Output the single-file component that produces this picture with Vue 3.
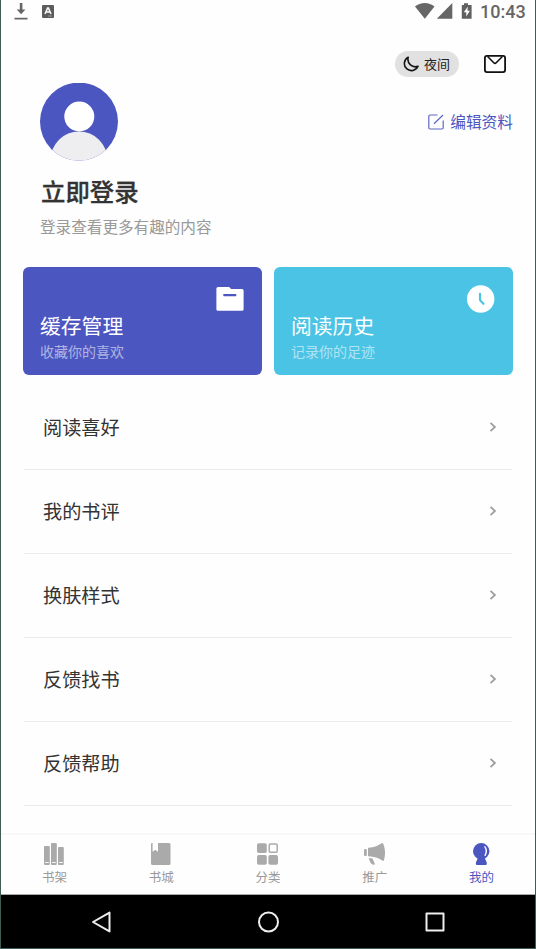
<script setup>
const rows = ['阅读喜好', '我的书评', '换肤样式', '反馈找书', '反馈帮助']
const cards = [
  { id: 'cache', title: '缓存管理', note: '收藏你的喜欢' },
  { id: 'history', title: '阅读历史', note: '记录你的足迹' },
]
const tabs = [
  { id: 'shelf', label: '书架' },
  { id: 'store', label: '书城' },
  { id: 'category', label: '分类' },
  { id: 'promo', label: '推广' },
  { id: 'mine', label: '我的' },
]
</script>

<template>
  <div class="screen">
    <header class="status">
      <div class="status-left">
        <svg width="14" height="18" viewBox="0 0 14 18">
          <path d="M5.800 1h2.600v6.500h3L7.100 12.200 2.700 7.500h3.100zM.5 15.800h13v1.700H.5z" fill="#666" />
        </svg>
        <svg width="12" height="13" viewBox="0 0 12 13">
          <rect width="12" height="13" rx="1" fill="#5c5c5c" />
          <path d="M3 9 5.600 3h.8L9 9M4.300 7h3.400" fill="none" stroke="#fff" stroke-width="1.500" />
          <path d="M6.500 11h1M8.500 11h1" stroke="#ddd" />
        </svg>
      </div>
      <div class="status-right">
        <svg width="58" height="18" viewBox="0 0 58 18">
          <path d="M0 4.500C5.500-.3 14-.3 19.500 4.500L9.800 16.700z" fill="#666" />
          <path d="M37.300 1v15.700H21.800z" fill="#666" />
          <path d="M49 1.300h4V3h3.600v13.700H46.800V3H49z" fill="#606060" />
          <path d="M52.700 4.700 48.800 10.200h2.500v4.400l3.600-5.800h-2.400z" fill="#fff" />
        </svg>
        <span class="time">10:43</span>
      </div>
    </header>

    <div class="tools">
      <button class="night">
        <svg width="16" height="16" viewBox="0 0 16 16">
          <path d="M5.200 1.200A7.100 7.100 0 1 0 15 10.300C9.500 12.300 3.600 7.500 5.200 1.200Z" fill="none" stroke="#151515" stroke-width="1.600" stroke-linejoin="round" />
        </svg>
        <span>夜间</span>
      </button>
      <svg width="22" height="18" viewBox="0 0 22 18">
        <rect x=".9" y=".9" width="20.200" height="16.200" rx="2" fill="none" stroke="#111" stroke-width="1.800" />
        <path d="M3.600 1.500 9.800 7.700q1.200 1.200 2.400 0L18.400 1.500" fill="none" stroke="#111" stroke-width="1.600" />
      </svg>
    </div>

    <section class="profile">
      <div class="avatar-row">
        <svg class="avatar" width="78" height="78" viewBox="0 0 78 78">
          <defs><clipPath id="disc"><circle cx="39" cy="38.600" r="39" /></clipPath></defs>
          <g clip-path="url(#disc)">
            <rect width="78" height="78" fill="#4c56c0" />
            <circle cx="39" cy="76.700" r="28.300" fill="#eeedef" />
            <circle cx="39.300" cy="33.500" r="15" fill="#fff" />
          </g>
        </svg>
        <a class="edit">
          <svg width="16" height="16" viewBox="0 0 16 16">
            <path d="M9.500 1H2Q.8 1 .8 2.200v11.600Q.8 15 2 15h12q1.200 0 1.200-1.200V6.500M6 9.800 15 1" fill="none" stroke="#5f67c4" stroke-width="1.200" />
          </svg>
          <span>编辑资料</span>
        </a>
      </div>
      <h1>立即登录</h1>
      <p>登录查看更多有趣的内容</p>
    </section>

    <section class="cards">
      <article v-for="card in cards" :key="card.id" class="card" :class="card.id">
        <svg v-if="card.id === 'cache'" class="card-icon" width="28" height="28" viewBox="0 0 28 28">
          <path d="M2 2h10.500q1 0 1.600.8l.9 1.200H26q1.600 0 1.600 1.600v18.600q0 1.600-1.600 1.600H2q-1.600 0-1.600-1.600V3.600Q.4 2 2 2z" fill="#fff" />
          <rect x="7.300" y="9" width="13" height="2.200" rx=".6" fill="#4c56c0" />
        </svg>
        <svg v-else class="card-icon" width="28" height="28" viewBox="0 0 28 28">
          <circle cx="13.700" cy="14" r="13.700" fill="#fff" />
          <path d="M13 8.800v5.500q0 1 .7 1.700l2.800 2.800" fill="none" stroke="#4ac3e5" stroke-width="2.200" stroke-linecap="round" />
        </svg>
        <h2>{{ card.title }}</h2>
        <p>{{ card.note }}</p>
      </article>
    </section>

    <ul class="list">
      <li v-for="row in rows" :key="row">
        <span>{{ row }}</span>
        <svg width="7" height="10" viewBox="0 0 7 10">
          <path d="M1.500.8 5.900 5 1.500 9.200" fill="none" stroke="#a0a0a0" stroke-width="1.800" />
        </svg>
      </li>
    </ul>

    <nav class="tabs">
      <a v-for="tab in tabs" :key="tab.id" :class="{ active: tab.id === 'mine' }">
        <svg width="22" height="22" viewBox="0 0 22 22" fill="currentColor">
          <template v-if="tab.id === 'shelf'">
            <rect x="1" y="3" width="5.800" height="19" rx="1" />
            <rect x="8" y="0" width="5.800" height="22" rx="1" />
            <rect x="15" y="4" width="5.800" height="18" rx="1" />
            <path d="M2 19.500h3.800M9 19.500h3.800M16 19.500h3.800" stroke="#fff" stroke-width=".9" />
          </template>
          <template v-else-if="tab.id === 'store'">
            <path d="M1 1.300Q1 0 2.300 0h.3v8.800l2.700-2 2.700 2V0H19q1.500 0 1.500 1.500v19Q20.500 22 19 22H2.500Q1 22 1 20.500z" />
          </template>
          <template v-else-if="tab.id === 'category'">
            <rect x="0" y=".2" width="9.800" height="9.800" rx="1.800" />
            <rect x="12.200" y="1" width="8" height="8.200" rx="1.200" fill="none" stroke="currentColor" stroke-width="1.500" />
            <rect x="0" y="12" width="9.800" height="9.800" rx="1.800" />
            <rect x="11.400" y="12" width="9.600" height="9.800" rx="1.800" />
          </template>
          <template v-else-if="tab.id === 'promo'">
            <rect x="0" y="6" width="2.800" height="7" rx="1" />
            <path d="M4 5.200Q4 4.700 4.500 4.700C10.500 4.500 14.500 2.500 17.700.3q1-.7 1.500.4c2.300 5 2.300 11.500.8 16.300q-.5 1.400-1.700.6C14.500 15 10 13.500 4.500 13.300q-.5 0-.5-.5zM4.800 15l3.800.6q1 2.600 2.100 4.800.5 1.200-.8 1.300Q6.500 22.200 4.800 15z" />
          </template>
          <template v-else>
            <circle cx="10.200" cy="8.200" r="8.200" />
            <path d="M6.700 15h7.200l.9 2.500q1 .8 1 3.200 0 1.300-1.200 1.300H6q-1.200 0-1.200-1.300 0-2.400 1.100-3.200z" />
            <path d="M13.900 3.800q2.700 3.800.2 8.500" fill="none" stroke="#fff" stroke-width="1.400" stroke-linecap="round" />
          </template>
        </svg>
        <span>{{ tab.label }}</span>
      </a>
    </nav>

    <footer class="system">
      <svg width="24" height="24" viewBox="0 0 24 24"><path d="M19.500 2.600v18.800L3 12z" /></svg>
      <svg width="24" height="24" viewBox="0 0 24 24"><circle cx="11.500" cy="12" r="9.500" /></svg>
      <svg width="24" height="24" viewBox="0 0 24 24"><rect x="3.500" y="3.500" width="17" height="17" /></svg>
    </footer>
  </div>
</template>

<style>
body {
  margin: 0;
  background: #fff;
}
</style>

<style scoped>
* {
  box-sizing: border-box;
}
svg {
  display: block;
  flex: none;
}
h1, h2, p, ul {
  margin: 0;
  padding: 0;
  font-weight: 400;
}
.screen {
  display: flex;
  flex-direction: column;
  width: 536px;
  height: 949px;
  border: solid #405c57;
  border-width: 0 1px 1px;
  background: #fefefe;
  color: #333;
  font-family: "Noto Sans CJK SC", sans-serif;
}
.status {
  display: flex;
  justify-content: space-between;
  height: 24px;
  padding: 2px 9px 0 13px;
}
.status-left {
  display: flex;
  gap: 14px;
}
.status-left svg:last-child {
  margin-top: 3px;
}
.status-right {
  display: flex;
  gap: 7px;
}
.time {
  width: 46px;
  font: 500 18px/20px Roboto, sans-serif;
  color: #666;
}
.tools {
  display: flex;
  justify-content: flex-end;
  align-items: center;
  gap: 25px;
  height: 26px;
  margin-top: 27px;
  padding-right: 29px;
}
.night {
  display: flex;
  align-items: center;
  gap: 5px;
  width: 64px;
  height: 26px;
  padding: 0 0 0 8px;
  border: 0;
  border-radius: 13px;
  background: #e1e1e1;
  color: #222;
  font: 13px/20px "Noto Sans CJK SC", sans-serif;
}
.profile {
  height: 185px;
  padding: 5.500px 22px 0 39px;
}
.avatar-row {
  display: flex;
  align-items: center;
  justify-content: space-between;
}
.edit {
  display: flex;
  align-items: center;
  gap: 6px;
  color: #4c56c0;
  font-size: 15.700px;
  line-height: 24px;
}
h1 {
  margin-top: 13px;
  padding-left: 1px;
  font-size: 24.400px;
  line-height: 34px;
  font-weight: 500;
  -webkit-text-stroke: 0.3px currentColor;
}
.profile p {
  margin-top: 6px;
  color: #999;
  font-size: 15.600px;
  line-height: 24px;
}
.cards {
  display: grid;
  grid-template-columns: 1fr 1fr;
  gap: 12px;
  margin-top: 5px;
  padding: 0 22px;
}
.card {
  display: flex;
  flex-direction: column;
  height: 108px;
  padding: 18px 18px 0 17px;
  border-radius: 6px;
  color: #fff;
}
.cache {
  background: #4c56c0;
}
.history {
  background: #4ac3e5;
}
.card-icon {
  align-self: flex-end;
}
.card h2 {
  margin-top: -4px;
  font-size: 20.800px;
  line-height: 32px;
}
.card p {
  font-size: 14px;
  line-height: 21px;
  opacity: 0.55;
}
.list {
  flex: 1;
  padding: 11px 23px 0;
  list-style: none;
}
.list li {
  display: flex;
  align-items: center;
  justify-content: space-between;
  height: 84px;
  padding: 0 16px 1px 19px;
  border-bottom: 1px solid #ececec;
  font-size: 19.200px;
}
.tabs {
  display: grid;
  grid-template-columns: repeat(5, 1fr);
  height: 62px;
  padding-top: 8px;
  border-top: 2px solid #f8f8f8;
  border-bottom: 1px solid #aaa;
}
.tabs a {
  display: flex;
  flex-direction: column;
  align-items: center;
  color: #aaa;
}
.tabs span {
  margin-top: 2px;
  color: #999;
  font-size: 12.500px;
  line-height: 20px;
}
.tabs .active,
.tabs .active span {
  color: #4c56c0;
}
.system {
  display: flex;
  align-items: center;
  justify-content: space-between;
  height: 53px;
  padding: 0 88px 0 89px;
  background: #000;
  fill: none;
  stroke: #eee;
  stroke-width: 2;
  stroke-linejoin: round;
}
</style>
